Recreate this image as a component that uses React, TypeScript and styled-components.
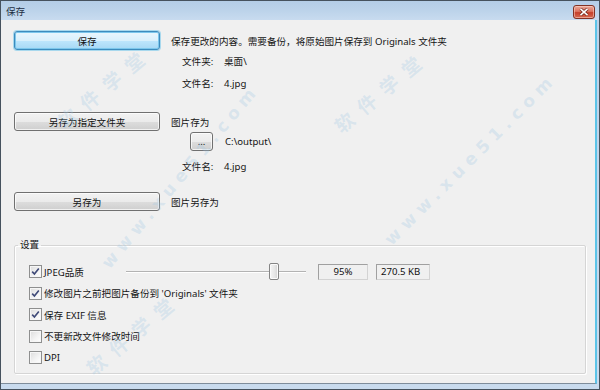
import React from 'react'
import styled, { createGlobalStyle } from 'styled-components'

const GlobalStyle = createGlobalStyle`
  html, body {
    margin: 0;
    padding: 0;
    background: #f0f0f0;
  }
  body {
    font-family: 'Noto Sans', 'Noto Sans CJK SC', sans-serif;
    font-size: 9.6px;
    color: #141414;
  }
`

const Window = styled.div`
  position: relative;
  width: 600px;
  height: 390px;
  box-sizing: border-box;
  border: 1px solid #46525e;
  background: linear-gradient(#bcd2e9, #c9dbee);
  display: flex;
  flex-direction: column;
  overflow: hidden;
`

const TitleBar = styled.div`
  height: 19px;
  flex: none;
  display: flex;
  align-items: center;
  justify-content: space-between;
  padding: 0 4px 0 5px;
  background: linear-gradient(#b4cde7 0%, #bcd3ea 50%, #c8dbef 100%);
`

const Title = styled.span`
  color: #1e2f44;
  font-size: 9.6px;
`

const CloseButton = styled.button`
  width: 22px;
  height: 14px;
  margin-top: 2px;
  padding: 0;
  border: 1px solid #823224;
  border-radius: 3px;
  background: linear-gradient(#eaa898 0%, #dc7460 45%, #c6402b 55%, #d66a52 100%);
  display: flex;
  align-items: center;
  justify-content: center;
  box-shadow: inset 0 0 0 1px rgba(255, 220, 210, 0.5);
`

const Client = styled.div`
  flex: 1;
  margin: 0 2px 5px 0;
  padding: 11px 0 0 13px;
  background: #f0f0f0;
  border-right: 2px solid #5cc4e8;
  border-bottom: 1px solid #7f8d9b;
  display: flex;
  flex-direction: column;
`

const ActionRow = styled.div<{ $top?: number }>`
  display: flex;
  align-items: center;
  height: 19px;
  gap: 11px;
  margin-top: ${p => p.$top ?? 0}px;
`

const Button = styled.button<{ $focused?: boolean; $width?: number }>`
  width: ${p => p.$width ?? 146}px;
  height: 19px;
  padding: 0;
  font: inherit;
  color: #111;
  border-radius: 3px;
  border: 1px solid ${p => (p.$focused ? '#3d8bbd' : '#707070')};
  background: ${p =>
    p.$focused
      ? 'linear-gradient(#eaf6fd 0%, #d9f0fc 50%, #bee6fd 51%, #a7d9f5 100%)'
      : 'linear-gradient(#f2f2f2 0%, #ebebeb 50%, #dddddd 51%, #cfcfcf 100%)'};
  box-shadow: ${p =>
    p.$focused
      ? 'inset 0 0 0 1px #7cc7ec, 0 0 0 1px rgba(120, 200, 235, 0.6)'
      : 'inset 0 0 0 1px rgba(255, 255, 255, 0.7)'};
  display: flex;
  align-items: center;
  justify-content: center;
`

const Caption = styled.span`
  white-space: nowrap;
`

const DetailLine = styled.div<{ $top?: number }>`
  display: flex;
  align-items: center;
  height: 22px;
  padding-left: 168px;
  margin-top: ${p => p.$top ?? 0}px;
`

const DetailLabel = styled.span`
  width: 42px;
  flex: none;
`

const BrowseRow = styled.div`
  display: flex;
  align-items: center;
  height: 19px;
  margin-top: 1px;
  padding-left: 176px;
  gap: 12px;
`

const GroupBox = styled.fieldset`
  margin: 28px 9px 0 0;
  padding: 0 8px 4px 3px;
  border: 1px solid #d5d5d5;
  border-radius: 2px;
  box-shadow: inset 1px 1px 0 #fff, 1px 1px 0 #fff;
`

const Legend = styled.legend`
  padding: 0 2px;
  line-height: 12px;
`

const OptionList = styled.div`
  margin-top: 10px;
  padding-left: 11px;
  display: flex;
  flex-direction: column;
`

const OptionRow = styled.div`
  display: flex;
  align-items: center;
  height: 21.5px;
`

const CheckLabel = styled.label<{ $width?: number }>`
  display: flex;
  align-items: center;
  gap: 2px;
  width: ${p => (p.$width ? `${p.$width}px` : 'auto')};
  flex: none;
  white-space: nowrap;
`

const Box = styled.span`
  width: 11px;
  height: 11px;
  border: 1px solid #8e8f8f;
  background: linear-gradient(135deg, #dcdcdc 0%, #f4f4f4 60%, #ffffff 100%);
  box-shadow: inset 0 0 0 1px #f6f6f6;
  display: flex;
  align-items: center;
  justify-content: center;
`

const Slider = styled.div`
  width: 180px;
  height: 17px;
  display: flex;
  align-items: center;
`

const Track = styled.div<{ $grow?: boolean; $width?: number }>`
  height: 1px;
  flex: ${p => (p.$grow ? 1 : 'none')};
  width: ${p => (p.$width ? `${p.$width}px` : 'auto')};
  background: #b3b3b3;
  border-bottom: 1px solid #ffffff;
`

const Thumb = styled.div`
  width: 8px;
  height: 15px;
  flex: none;
  border: 1px solid #858585;
  border-radius: 2px;
  background: linear-gradient(90deg, #f5f5f5 0%, #e6e6e6 60%, #d3d3d3 100%);
  box-shadow: inset 0 0 0 1px #fbfbfb;
`

const ValueBox = styled.div<{ $align?: 'center' | 'left'; $gap?: number }>`
  width: 48px;
  height: 14px;
  margin-left: ${p => p.$gap ?? 8}px;
  border: 1px solid #d3d3d3;
  border-top-color: #a0a0a0;
  border-left-color: #a0a0a0;
  background: #f0f0f0;
  display: flex;
  align-items: center;
  justify-content: ${p => (p.$align === 'left' ? 'flex-start' : 'center')};
  padding-left: ${p => (p.$align === 'left' ? '4px' : '0')};
  box-sizing: content-box;
  color: #111;
`

const Watermark = styled.div<{ $size: number; $spacing: number }>`
  position: absolute;
  color: rgba(160, 200, 228, 0.3);
  font-size: ${p => p.$size}px;
  font-weight: 700;
  letter-spacing: ${p => p.$spacing}px;
  white-space: nowrap;
  transform-origin: center;
  pointer-events: none;
  font-family: 'DejaVu Sans', 'Noto Sans CJK SC', sans-serif;
`

const CheckBox = ({ checked }: { checked?: boolean }) => (
  <Box>
    {checked && (
      <svg width="9" height="9" viewBox="0 0 9 9">
        <path d="M1.2 4.6 L3.4 7 L7.8 1.4" fill="none" stroke="#3f4a78" strokeWidth="1.6" />
      </svg>
    )}
  </Box>
)

const marks = [
  { text: '软件学堂', left: 45, top: 72, size: 19, spacing: 10, angle: -40 },
  { text: 'www.xue51.com', left: 62, top: 165, size: 17, spacing: 6, angle: -50 },
  { text: '软件学堂', left: 322, top: 76, size: 19, spacing: 10, angle: -40 },
  { text: 'www.xue51.com', left: 352, top: 148, size: 17, spacing: 6, angle: -45 },
  { text: '软件学堂', left: 74, top: 318, size: 19, spacing: 10, angle: -40 },
]

const options = [
  { label: "修改图片之前把图片备份到 'Originals' 文件夹", checked: true },
  { label: '保存 EXIF 信息', checked: true },
  { label: '不更新改文件修改时间', checked: false },
  { label: 'DPI', checked: false },
]

const App: React.FC = () => {
  const quality = 95
  const thumbOffset = 143

  return (
    <>
      <GlobalStyle />
      <Window>
        <TitleBar>
          <Title>保存</Title>
          <CloseButton aria-label="关闭">
            <svg width="10" height="8" viewBox="0 0 10 8">
              <path d="M1.5 0.8 L8.5 7.2 M8.5 0.8 L1.5 7.2" stroke="#6b2418" strokeWidth="3" />
              <path d="M1.5 0.8 L8.5 7.2 M8.5 0.8 L1.5 7.2" stroke="#ffffff" strokeWidth="1.6" />
            </svg>
          </CloseButton>
        </TitleBar>

        <Client>
          <ActionRow>
            <Button $focused>保存</Button>
            <Caption>保存更改的内容。需要备份，将原始图片保存到 Originals 文件夹</Caption>
          </ActionRow>
          <DetailLine>
            <DetailLabel>文件夹:</DetailLabel>
            <span>桌面\</span>
          </DetailLine>
          <DetailLine>
            <DetailLabel>文件名:</DetailLabel>
            <span>4.jpg</span>
          </DetailLine>

          <ActionRow $top={18}>
            <Button>另存为指定文件夹</Button>
            <Caption>图片存为</Caption>
          </ActionRow>
          <BrowseRow>
            <Button $width={23}>...</Button>
            <span>C:\output\</span>
          </BrowseRow>
          <DetailLine $top={4}>
            <DetailLabel>文件名:</DetailLabel>
            <span>4.jpg</span>
          </DetailLine>

          <ActionRow $top={15}>
            <Button>另存为</Button>
            <Caption>图片另存为</Caption>
          </ActionRow>

          <GroupBox>
            <Legend>设置</Legend>
            <OptionList>
              <OptionRow>
                <CheckLabel $width={97}>
                  <CheckBox checked />
                  JPEG品质
                </CheckLabel>
                <Slider>
                  <Track $width={thumbOffset} />
                  <Thumb />
                  <Track $grow />
                </Slider>
                <ValueBox $gap={12}>{quality}%</ValueBox>
                <ValueBox $align="left">270.5 KB</ValueBox>
              </OptionRow>
              {options.map(o => (
                <OptionRow key={o.label}>
                  <CheckLabel>
                    <CheckBox checked={o.checked} />
                    {o.label}
                  </CheckLabel>
                </OptionRow>
              ))}
            </OptionList>
          </GroupBox>
        </Client>

        {marks.map((m, i) => (
          <Watermark
            key={i}
            $size={m.size}
            $spacing={m.spacing}
            style={{ left: m.left, top: m.top, transform: `rotate(${m.angle}deg)` }}
          >
            {m.text}
          </Watermark>
        ))}
      </Window>
    </>
  )
}

export default App
